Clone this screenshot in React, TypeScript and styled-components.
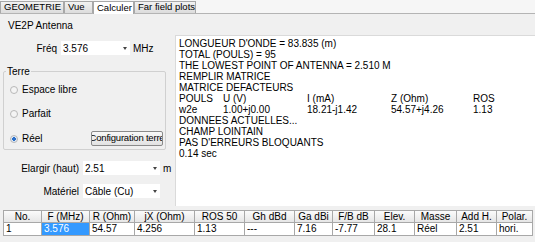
import React from "react";
import styled, { createGlobalStyle } from "styled-components";

const GlobalStyle = createGlobalStyle`
  html, body {
    margin: 0;
    padding: 0;
    background: #f0f0f0;
  }
  body {
    font-family: "Liberation Sans", Arial, sans-serif;
    color: #000;
  }
`;

const Window = styled.div`
  width: 535px;
  height: 242px;
  overflow: hidden;
  display: flex;
  flex-direction: column;
  background: #f0f0f0;
`;

const TabBar = styled.div`
  display: flex;
  align-items: flex-end;
  height: 13px;
  border-bottom: 1px solid #b4b4b4;
  background: #f6f6f6;
`;

const Tab = styled.div<{ $active?: boolean; $w: number }>`
  width: ${(p) => p.$w}px;
  height: ${(p) => (p.$active ? 13 : 12)}px;
  box-sizing: border-box;
  border: 1px solid #a8a8a8;
  border-bottom: none;
  margin-bottom: ${(p) => (p.$active ? -1 : 0)}px;
  background: ${(p) => (p.$active ? "#fff" : "linear-gradient(#f2f2f2, #dcdcdc)")};
  font-size: 9.5px;
  line-height: ${(p) => (p.$active ? 11 : 10)}px;
  padding-left: 3px;
  white-space: nowrap;
  overflow: hidden;
  position: relative;
  z-index: ${(p) => (p.$active ? 1 : 0)};
`;

const Main = styled.div`
  display: flex;
  height: 192px;
`;

const LeftPanel = styled.div`
  width: 175px;
  display: flex;
  flex-direction: column;
`;

const Title = styled.div`
  font-size: 10px;
  margin: 6px 0 0 8px;
  height: 12px;
`;

const FieldRow = styled.div<{ $label: number; $top: number }>`
  display: flex;
  align-items: center;
  margin-top: ${(p) => p.$top}px;
  height: 14px;
  font-size: 10px;
  & > label {
    width: ${(p) => p.$label}px;
    text-align: right;
    padding-right: 4px;
  }
`;

const Input = styled.div<{ $w: number }>`
  width: ${(p) => p.$w}px;
  height: 14px;
  box-sizing: border-box;
  background: #fff;
  display: flex;
  align-items: center;
  justify-content: space-between;
  padding: 0 3px 0 2px;
  font-size: 10px;
`;

const Caret = styled.span`
  width: 0;
  height: 0;
  border-left: 2px solid transparent;
  border-right: 2px solid transparent;
  border-top: 3px solid #444;
`;

const Unit = styled.span`
  margin-left: 3px;
`;

const GroupBox = styled.fieldset`
  margin: 11px 0 0 3px;
  width: 163px;
  height: 84px;
  box-sizing: border-box;
  border: 1px solid #d0d0d0;
  border-radius: 2px;
  padding: 0 6px 0 6px;
  font-size: 10px;
  display: flex;
  flex-direction: column;
  & > legend {
    padding: 0 1px;
    margin-left: -4px;
  }
`;

const RadioRow = styled.div<{ $top: number }>`
  display: flex;
  align-items: center;
  height: 15px;
  margin-top: ${(p) => p.$top}px;
`;

const Radio = styled.span<{ $on?: boolean }>`
  width: 6px;
  height: 6px;
  border-radius: 50%;
  border: 1px solid #b8b8b8;
  background: ${(p) => (p.$on ? "radial-gradient(circle, #2a6fc9 0 1.6px, #dfe8f4 2px)" : "#f4f4f4")};
  margin-right: 4px;
  flex: none;
`;

const Button = styled.button`
  margin: 0 -4px 0 auto;
  width: 72px;
  height: 15px;
  padding: 0;
  box-sizing: border-box;
  border: 1px solid #8a8a8a;
  border-radius: 2px;
  background: linear-gradient(#f8f8f8, #e2e2e2);
  font-family: inherit;
  font-size: 9.5px;
  letter-spacing: -0.2px;
  white-space: nowrap;
  overflow: hidden;
  display: flex;
  justify-content: center;
  color: #000;
`;

const Output = styled.div`
  margin: 21px 0 0 0;
  flex: 1;
  height: 171px;
  background: #fff;
  border-top: 1px solid #dadada;
  border-left: 1px solid #dadada;
  padding: 2px 0 0 3px;
  box-sizing: border-box;
  font-size: 10px;
  line-height: 11px;
`;

const Line = styled.div`
  white-space: nowrap;
  height: 11px;
`;

const Cols = styled.div`
  display: grid;
  grid-template-columns: 44px 84px 84px 82px auto;
  height: 11px;
  white-space: nowrap;
`;

const Table = styled.div`
  margin: 4px 0 0 3px;
  width: 530px;
  display: flex;
  flex-direction: column;
  font-size: 10px;
`;

const colWidths = [39, 48, 45, 60, 50, 50, 38, 42, 40, 42, 40, 36];

const TRow = styled.div`
  display: flex;
  height: 13px;
`;

const HeadCell = styled.div<{ $w: number }>`
  width: ${(p) => p.$w}px;
  box-sizing: border-box;
  border: 1px solid #a8a8a8;
  border-left: none;
  &:first-child {
    border-left: 1px solid #a8a8a8;
  }
  background: linear-gradient(#fbfbfb, #e6e6e6);
  text-align: center;
  line-height: 11px;
  white-space: nowrap;
`;

const Cell = styled.div<{ $w: number; $sel?: boolean }>`
  width: ${(p) => p.$w}px;
  box-sizing: border-box;
  border-right: 1px solid #a8a8a8;
  border-bottom: 1px solid #a8a8a8;
  &:first-child {
    border-left: 1px solid #a8a8a8;
  }
  background: ${(p) => (p.$sel ? "#3399ff" : "#fff")};
  color: ${(p) => (p.$sel ? "#fff" : "#000")};
  padding-left: 2px;
  line-height: 12px;
  white-space: nowrap;
`;

const headers = ["No.", "F (MHz)", "R (Ohm)", "jX (Ohm)", "ROS  50", "Gh dBd", "Ga dBi", "F/B dB", "Elev.", "Masse", "Add H.", "Polar."];
const values = ["1", "3.576", "54.57", "4.256", "1.13", "---", "7.16", "-7.77", "28.1", "Réel", "2.51", "hori."];

const App: React.FC = () => (
  <>
    <GlobalStyle />
    <Window>
      <TabBar>
        <Tab $w={64}>GEOMETRIE</Tab>
        <Tab $w={29}>Vue</Tab>
        <Tab $w={41} $active>Calculer</Tab>
        <Tab $w={62}>Far field plots</Tab>
      </TabBar>
      <Main>
        <LeftPanel>
          <Title>VE2P Antenna</Title>
          <FieldRow $label={57} $top={9}>
            <label>Fréq</label>
            <Input $w={69}>
              3.576
              <Caret />
            </Input>
            <Unit>MHz</Unit>
          </FieldRow>
          <GroupBox>
            <legend>Terre</legend>
            <RadioRow $top={5}>
              <Radio />
              Espace libre
            </RadioRow>
            <RadioRow $top={9}>
              <Radio />
              Parfait
            </RadioRow>
            <RadioRow $top={10}>
              <Radio $on />
              Réel
              <Button>Configuration terre</Button>
            </RadioRow>
          </GroupBox>
          <FieldRow $label={79} $top={11}>
            <label>Elargir (haut)</label>
            <Input $w={77}>
              2.51
              <Caret />
            </Input>
            <Unit>m</Unit>
          </FieldRow>
          <FieldRow $label={79} $top={9}>
            <label>Matériel</label>
            <Input $w={77}>
              Câble (Cu)
              <Caret />
            </Input>
          </FieldRow>
        </LeftPanel>
        <Output>
          <Line>LONGUEUR D'ONDE = 83.835 (m)</Line>
          <Line>TOTAL (POULS) = 95</Line>
          <Line>THE LOWEST POINT OF ANTENNA = 2.510 M</Line>
          <Line>REMPLIR MATRICE</Line>
          <Line>MATRICE DEFACTEURS</Line>
          <Cols>
            <span>POULS</span>
            <span>U (V)</span>
            <span>I (mA)</span>
            <span>Z (Ohm)</span>
            <span>ROS</span>
          </Cols>
          <Cols>
            <span>w2e</span>
            <span>1.00+j0.00</span>
            <span>18.21-j1.42</span>
            <span>54.57+j4.26</span>
            <span>1.13</span>
          </Cols>
          <Line>DONNEES ACTUELLES...</Line>
          <Line>CHAMP LOINTAIN</Line>
          <Line>PAS D'ERREURS BLOQUANTS</Line>
          <Line>0.14 sec</Line>
        </Output>
      </Main>
      <Table>
        <TRow>
          {headers.map((h, i) => (
            <HeadCell key={h} $w={colWidths[i]}>
              {h}
            </HeadCell>
          ))}
        </TRow>
        <TRow>
          {values.map((v, i) => (
            <Cell key={i} $w={colWidths[i]} $sel={i === 1}>
              {v}
            </Cell>
          ))}
        </TRow>
      </Table>
    </Window>
  </>
);

export default App;
